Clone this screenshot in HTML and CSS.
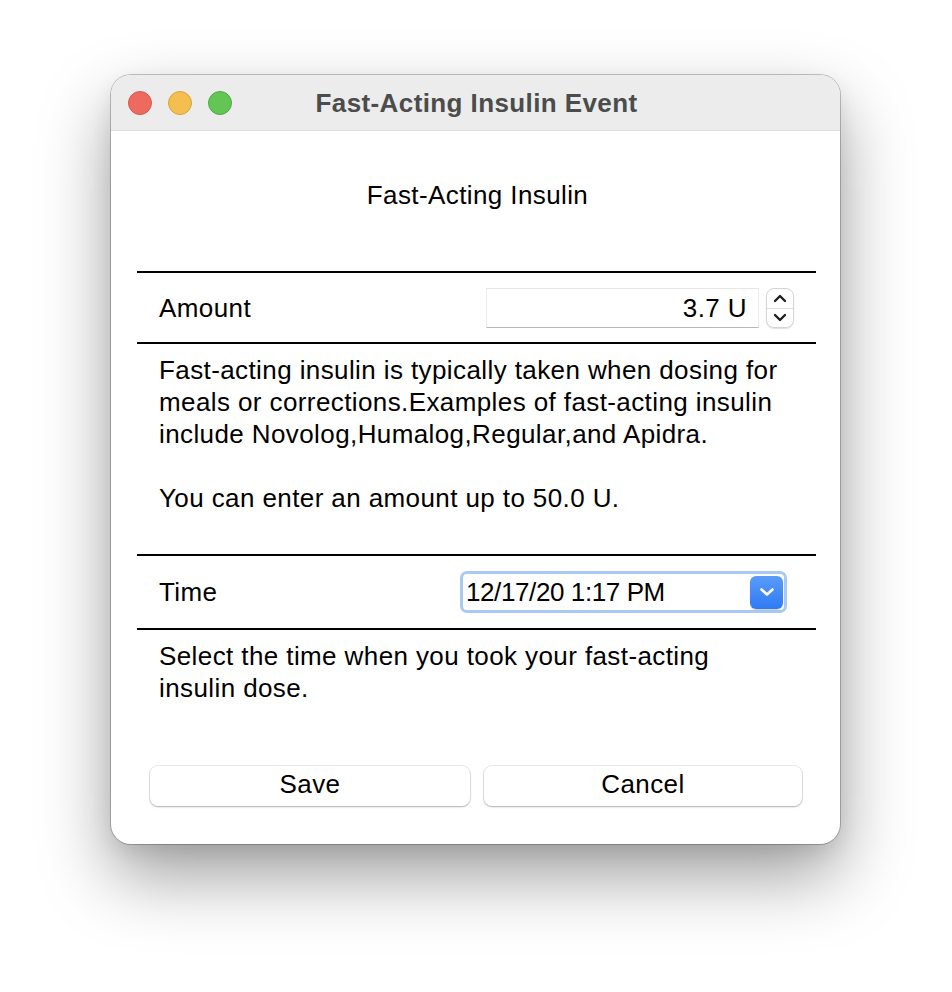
FILE: index.html
```html
<!DOCTYPE html>
<html>
<head>
<meta charset="utf-8">
<link rel="stylesheet" href="styles.css">
</head>
<body>
<div class="window">
  <div class="titlebar">
    <div class="lights">
      <span class="light red"></span>
      <span class="light yellow"></span>
      <span class="light green"></span>
    </div>
    <div class="title">Fast-Acting Insulin Event</div>
  </div>
  <div class="content">
    <div class="heading">Fast-Acting Insulin</div>
    <div class="row amount-row">
      <div class="label">Amount</div>
      <div class="amount-ctrl">
        <div class="field">3.7 U</div>
        <div class="stepper">
          <div class="step">
            <svg width="16" height="11" viewBox="0 0 16 11"><path d="M3 8 L8 3 L13 8" fill="none" stroke="#1e1e1e" stroke-width="2.4" stroke-linecap="round" stroke-linejoin="round"/></svg>
          </div>
          <div class="step">
            <svg width="16" height="11" viewBox="0 0 16 11"><path d="M3 3 L8 8 L13 3" fill="none" stroke="#1e1e1e" stroke-width="2.4" stroke-linecap="round" stroke-linejoin="round"/></svg>
          </div>
        </div>
      </div>
    </div>
    <div class="desc desc-amount">
      <p>Fast-acting insulin is typically taken when dosing for meals or corrections.Examples of fast-acting insulin include Novolog,Humalog,Regular,and Apidra.</p>
      <p class="gap">You can enter an amount up to 50.0 U.</p>
    </div>
    <div class="row time-row">
      <div class="label">Time</div>
      <div class="popup">
        <span class="popup-text">12/17/20 1:17 PM</span>
        <span class="popup-btn">
          <svg width="18" height="12" viewBox="0 0 18 12"><path d="M3.5 3.5 L9 8.5 L14.5 3.5" fill="none" stroke="#fff" stroke-width="2.6" stroke-linecap="round" stroke-linejoin="round"/></svg>
        </span>
      </div>
    </div>
    <div class="desc desc-time">
      <p>Select the time when you took your fast-acting insulin dose.</p>
    </div>
    <div class="buttons">
      <button class="btn save">Save</button>
      <button class="btn cancel">Cancel</button>
    </div>
  </div>
</div>
</body>
</html>
```

FILE: styles.css
```css
html, body {
  margin: 0;
  padding: 0;
  background: #ffffff;
}
body {
  font-family: "Liberation Sans", Arial, sans-serif;
  color: #000;
  padding: 75px 0 0 111px;
  min-height: 992px;
  box-sizing: border-box;
}
.window {
  width: 729px;
  height: 769px;
  border-radius: 20px;
  background: #fff;
  overflow: hidden;
  box-shadow: 0 0 0 1px rgba(0,0,0,0.22), 0 32px 70px rgba(0,0,0,0.38), 0 8px 20px rgba(0,0,0,0.08);
  display: flex;
  flex-direction: column;
}
.titlebar {
  height: 55px;
  flex: none;
  background: #ebeceb;
  border-bottom: 1px solid #dcdcdc;
  position: relative;
  display: flex;
  align-items: center;
  justify-content: center;
}
.lights {
  position: absolute;
  left: 17px;
  top: 16px;
  display: flex;
  gap: 16px;
}
.light {
  width: 24px;
  height: 24px;
  border-radius: 50%;
  box-sizing: border-box;
}
.red { background: #ee6a5f; border: 1px solid #d35a50; }
.yellow { background: #f5bf4f; border: 1px solid #d8a23e; }
.green { background: #62c554; border: 1px solid #50a945; }
.title {
  font-size: 26px;
  letter-spacing: 0.4px;
  font-weight: bold;
  color: #4c4c4c;
  margin-left: 2px;
  margin-top: 1px;
}
.content {
  padding: 0 24px 0 26px;
  display: flex;
  flex-direction: column;
  font-size: 26px;
  letter-spacing: 0.4px;
}
.heading {
  text-align: center;
  line-height: 28px;
  padding-top: 50px;
  padding-bottom: 62px;
  padding-left: 2px;
}
.row {
  border-top: 2px solid #000;
  border-bottom: 2px solid #000;
  display: flex;
  align-items: center;
  justify-content: space-between;
  padding-left: 22px;
}
.amount-row {
  height: 68px;
  padding-top: 1px;
  padding-right: 22px;
}
.amount-ctrl {
  display: flex;
  align-items: center;
  gap: 7px;
}
.field {
  width: 273px;
  height: 40px;
  box-sizing: border-box;
  border-top: 1px solid #e6e6e6;
  border-left: 1px solid #ececec;
  border-right: 1px solid #ececec;
  border-bottom: 1px solid #b8b8b8;
  background: #fff;
  line-height: 38px;
  text-align: right;
  padding-right: 11px;
}
.stepper {
  width: 28px;
  height: 40px;
  box-sizing: border-box;
  border-radius: 8px;
  border: 1px solid #d4d4d4;
  box-shadow: 0 1px 1px rgba(0,0,0,0.12);
  display: flex;
  flex-direction: column;
  overflow: hidden;
}
.step {
  flex: 1;
  display: flex;
  align-items: center;
  justify-content: center;
}
.step + .step {
  border-top: 1px solid #e2e2e2;
}
.desc {
  padding-left: 22px;
  padding-right: 30px;
  line-height: 32px;
}
.desc p {
  margin: 0;
}
.desc .gap {
  margin-top: 32px;
}
.desc-amount {
  padding-top: 10px;
  padding-bottom: 40px;
}
.desc-amount + .row {
  border-top: 2px solid #000;
}
.time-row {
  height: 72px;
  padding-right: 29px;
}
.popup {
  width: 327px;
  height: 42px;
  box-sizing: border-box;
  border: 3px solid #a9c8f3;
  border-radius: 7px;
  display: flex;
  align-items: center;
  justify-content: space-between;
  padding: 0 1px 0 3px;
  background: #fff;
}
.popup-text {
  letter-spacing: -0.4px;
}
.popup-btn {
  width: 33px;
  height: 33px;
  border-radius: 6px;
  background: linear-gradient(#5a9cf9, #2f7af4);
  display: flex;
  align-items: center;
  justify-content: center;
  box-shadow: 0 1px 1px rgba(0,0,0,0.2);
}
.desc-time {
  padding-top: 10px;
}
.buttons {
  display: flex;
  gap: 14px;
  margin-top: 62px;
  padding-left: 13px;
  padding-right: 14px;
}
.btn {
  height: 40px;
  border: none;
  border-radius: 8px;
  background: #fff;
  font-family: "Liberation Sans", Arial, sans-serif;
  font-size: 26px;
  letter-spacing: 0.4px;
  color: #000;
  padding: 0 0 3px 0;
  box-shadow: 0 0 0 1px rgba(0,0,0,0.08), 0 1px 2px rgba(0,0,0,0.25);
}
.save { width: 320px; }
.cancel { width: 318px; }
```
